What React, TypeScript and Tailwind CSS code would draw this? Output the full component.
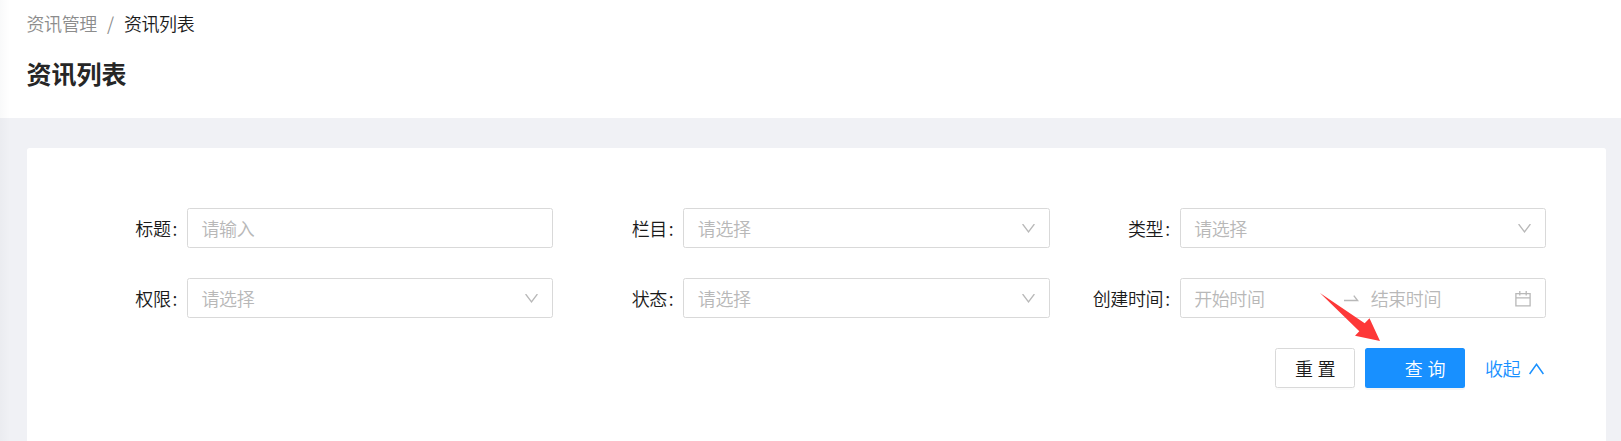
import type { ReactNode } from 'react';

function DownIcon() {
  return (
    <svg className="h-[10px] w-[13px]" viewBox="0 0 13 10" fill="none" stroke="currentColor" strokeWidth="1.3">
      <path d="M0.6 0L6.5 8L12.4 0" />
    </svg>
  );
}

function UpIcon() {
  return (
    <svg className="h-3 w-[15px]" viewBox="0 0 15 12" fill="none" stroke="currentColor" strokeWidth="1.5">
      <path d="M0.6 11L7.5 1.4L14.4 11" />
    </svg>
  );
}

function SwapIcon() {
  return (
    <svg className="h-[7px] w-[15px]" viewBox="0 0 15 7" fill="none" stroke="currentColor" strokeWidth="1.4">
      <path d="M0 5.5H13.6L9.8 0.6" />
    </svg>
  );
}

function CalendarIcon() {
  return (
    <svg className="h-4 w-4" viewBox="0 0 16 16" fill="none" stroke="currentColor" strokeWidth="1.3">
      <path d="M0.9 2.6H15.1V14.9H0.9ZM0.9 6.9H15.1M4.8 0V4.4M11.2 0V4.4" />
    </svg>
  );
}

function Field({ label, children }: { label: string; children: ReactNode }) {
  return (
    <div className="flex h-10 items-center">
      <div className="flex w-[130px] shrink-0 justify-end pt-px pr-[9.5px] text-[#1a1a1a]">
        <span>{label}</span>
        <span className="ml-[2px] w-[5px]">:</span>
      </div>
      <div className="flex h-10 min-w-0 flex-1 items-center rounded-[2.5px] border border-[#d9d9d9] pt-px pr-[14px] pl-[13.5px] text-[#b8b8b8]">
        {children}
      </div>
    </div>
  );
}

function SelectField({ label }: { label: string }) {
  return (
    <Field label={label}>
      <span className="flex-1">请选择</span>
      <DownIcon />
    </Field>
  );
}

export default function App() {
  return (
    <div className="relative flex h-[441px] w-[1621px] flex-col overflow-hidden bg-[#f0f1f5] font-['Noto_Sans_CJK_SC',sans-serif] text-[18px] leading-[27.5px] font-[350] tracking-[-0.4px]">
      <header className="h-[118px] bg-white pt-[10px] pl-[26.5px]">
        <nav className="flex items-center text-[#8c8c8c]">
          <span>资讯管理</span>
          <span className="w-[27px] text-center">/</span>
          <span className="text-[#1a1a1a]">资讯列表</span>
        </nav>
        <h1 className="mt-[15px] text-[25px] leading-[40px] font-bold tracking-normal text-[#262626]">资讯列表</h1>
      </header>
      <main className="mt-[30px] mr-[15px] ml-[27px] flex-1 rounded-t-[2.5px] bg-white pt-[60px] pr-[60px] pl-[30px]">
        <div className="grid grid-cols-3 gap-y-[30px]">
          <Field label="标题">请输入</Field>
          <SelectField label="栏目" />
          <SelectField label="类型" />
          <SelectField label="权限" />
          <SelectField label="状态" />
          <Field label="创建时间">
            <span className="w-[149.5px]">开始时间</span>
            <SwapIcon />
            <span className="ml-[12px] flex-1">结束时间</span>
            <CalendarIcon />
          </Field>
        </div>
        <div className="mt-[30px] mr-[2px] flex items-center justify-end">
          <button className="flex h-10 w-20 items-center justify-center gap-[5px] rounded-[2.5px] border border-[#d9d9d9] bg-white pt-px text-[#1a1a1a] shadow-[0_2px_0_rgba(0,0,0,0.015)]">
            <span>重</span>
            <span>置</span>
          </button>
          <button className="ml-[10px] flex h-10 w-[100px] items-center justify-end gap-[5px] rounded-[2.5px] bg-[#1890ff] pt-px pr-[20px] text-white shadow-[0_2px_0_rgba(0,0,0,0.04)]">
            <span>查</span>
            <span>询</span>
          </button>
          <a className="ml-[20px] flex w-[59px] items-center justify-between pt-px text-[#1890ff]">
            <span>收起</span>
            <UpIcon />
          </a>
        </div>
      </main>
      <div className="absolute inset-y-0 left-0 w-[10px] bg-linear-to-r from-[rgba(0,21,41,0.025)] to-transparent" />
      <svg className="absolute top-[292px] left-[1319px]" width="62" height="50" viewBox="1319 292 62 50" fill="#fd3838">
        <path d="M1320 293L1364.7 323.3L1369.5 318.3L1380 341L1355 335.7L1359.3 331.3Z" />
      </svg>
    </div>
  );
}
